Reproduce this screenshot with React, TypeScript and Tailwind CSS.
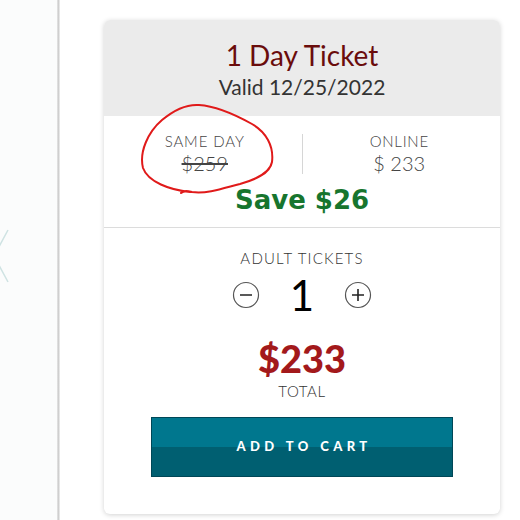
import React from 'react';

const font = { fontFamily: '"Lato", "Noto Sans", sans-serif' };

function CircleButton({ kind }: { kind: 'minus' | 'plus' }) {
  return (
    <svg width="28" height="28" viewBox="0 0 28 28" className="block">
      <circle cx="14" cy="14" r="12.5" fill="none" stroke="#555" strokeWidth="1.2" />
      <line x1="8" y1="14" x2="20" y2="14" stroke="#222" strokeWidth="1.6" />
      {kind === 'plus' && <line x1="14" y1="8" x2="14" y2="20" stroke="#222" strokeWidth="1.6" />}
    </svg>
  );
}

export default function App() {
  return (
    <div className="relative flex h-[520px] w-[520px] overflow-hidden bg-white" style={font}>
      {/* left edge of the page behind the card */}
      <div className="relative h-full w-[57px] bg-[#fbfcfc]">
        <svg width="20" height="60" viewBox="0 0 20 60" className="absolute left-0 top-[228px]">
          <path d="M8 2 L-6 28 L8 54" fill="none" stroke="#cfe3e3" strokeWidth="1.5" />
        </svg>
      </div>
      <div className="h-full w-[3px] bg-gradient-to-r from-[#e6e6e6] via-[#cfcfcf] to-[#f2f2f2]" />

      <div className="flex-1 pl-[44px] pt-[20px]">
        <div className="relative w-[396px] overflow-hidden rounded-md bg-white shadow-[0_1px_5px_rgba(0,0,0,0.18)]">
          <div className="flex h-[96px] flex-col items-center bg-[#ebebeb] pt-[17px]">
            <div className="text-[28px] leading-[36px] text-[#6a0c0c]">1 Day Ticket</div>
            <div className="mt-[1px] text-[21px] leading-[26px] text-[#333]">Valid 12/25/2022</div>
          </div>

          <div className="flex flex-col items-center pt-[16px]">
            <div className="flex w-full items-center">
              <div className="flex flex-1 flex-col items-center pl-[4px]">
                <div className="text-[15px] font-light leading-[18px] tracking-[0.06em] text-[#444]">SAME DAY</div>
                <div className="text-[20px] font-light leading-[26px] text-[#444] line-through">$259</div>
              </div>
              <div className="h-[40px] w-px bg-[#d6d6d6]" />
              <div className="flex flex-1 flex-col items-center pr-[4px]">
                <div className="text-[15px] font-light leading-[18px] tracking-[0.05em] text-[#444]">ONLINE</div>
                <div className="text-[20px] font-light leading-[26px] text-[#444]">$ 233</div>
              </div>
            </div>
            <div
              className="mt-[8px] text-[26px] font-bold leading-[32px] text-[#17752e]"
              style={{ fontFamily: '"DejaVu Sans", sans-serif' }}
            >
              Save $26
            </div>
            <div className="mt-[11px] h-px w-full bg-[#dcdcdc]" />
          </div>

          <div className="flex flex-col items-center pt-[20px]">
            <div className="text-[15px] font-light leading-[20px] tracking-[0.08em] text-[#333]">ADULT TICKETS</div>
            <div className="mt-[4px] flex items-center gap-[30px]">
              <CircleButton kind="minus" />
              <div className="text-[42px] leading-[46px] text-black">1</div>
              <CircleButton kind="plus" />
            </div>
            <div className="mt-[19px] text-[38px] font-black leading-[42px] text-[#a3191b]">$233</div>
            <div className="mt-[2px] text-[15px] font-light leading-[20px] tracking-[0.04em] text-[#333]">TOTAL</div>
            <button className="mb-[37px] mt-[16px] flex h-[60px] w-[302px] flex-col overflow-hidden border border-[#004757]">
              <div className="relative flex h-full w-full items-center justify-center bg-gradient-to-b from-[#00778e] from-50% to-[#005f71] to-50%">
                <span className="pl-[4px] text-[13px] font-black tracking-[0.34em] text-white">ADD TO CART</span>
              </div>
            </button>
          </div>

          {/* hand-drawn circle around the same-day price */}
          <svg width="396" height="200" viewBox="0 0 396 200" className="pointer-events-none absolute left-0 top-0">
            <path
              d="M86 172 C66 170 44 162 39 148 C35 132 44 112 58 100 C70 90 82 84 95 85 C112 86 130 94 148 104 C162 112 170 126 168 142 C166 154 150 160 136 164 C120 168 104 174 88 172 C84 171 80 170 77 173"
              fill="none"
              stroke="#e01a1a"
              strokeWidth="2"
              strokeLinecap="round"
            />
          </svg>
        </div>
      </div>
    </div>
  );
}
